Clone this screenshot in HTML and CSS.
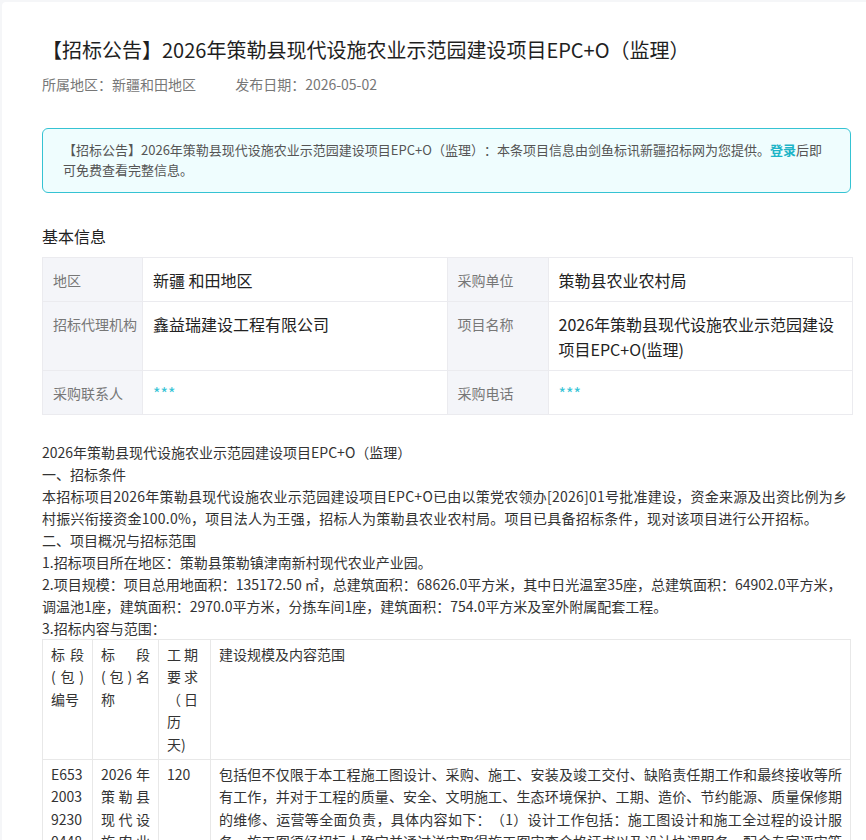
FILE: index.html
```html
<!DOCTYPE html>
<html lang="zh-CN">
<head>
    <meta charset="UTF-8">
    <meta name="viewport" content="width=device-width, initial-scale=1.0">
    <title>招标公告详情</title>
    <link rel="stylesheet" href="styles.css">
</head>
<body>
    <div class="detail">
        <h1 class="title">【招标公告】2026年策勒县现代设施农业示范园建设项目EPC+O（监理）</h1>
        <div class="meta">
            <span>所属地区：新疆和田地区</span>
            <span>发布日期：2026-05-02</span>
        </div>

        <div class="notice">
            【招标公告】2026年策勒县现代设施农业示范园建设项目EPC+O（监理）：本条项目信息由剑鱼标讯新疆招标网为您提供。<a href="#" class="login">登录</a>后即可免费查看完整信息。
        </div>

        <h2 class="section-title">基本信息</h2>
        <table class="info">
            <colgroup>
                <col class="col-label">
                <col class="col-value">
                <col class="col-label2">
                <col class="col-value">
            </colgroup>
            <tr>
                <th>地区</th>
                <td>新疆 和田地区</td>
                <th>采购单位</th>
                <td>策勒县农业农村局</td>
            </tr>
            <tr>
                <th>招标代理机构</th>
                <td>鑫益瑞建设工程有限公司</td>
                <th>项目名称</th>
                <td>2026年策勒县现代设施农业示范园建设项目EPC+O(监理)</td>
            </tr>
            <tr>
                <th>采购联系人</th>
                <td class="hidden-val">***</td>
                <th>采购电话</th>
                <td class="hidden-val">***</td>
            </tr>
        </table>

        <!-- 公告正文 -->
        <div class="content">
            <p>2026年策勒县现代设施农业示范园建设项目EPC+O（监理）</p>
            <p>一、招标条件</p>
            <p class="wide">本招标项目2026年策勒县现代设施农业示范园建设项目EPC+O已由以策党农领办[2026]01号批准建设，资金来源及出资比例为乡村振兴衔接资金100.0%，项目法人为王强，招标人为策勒县农业农村局。项目已具备招标条件，现对该项目进行公开招标。</p>
            <p>二、项目概况与招标范围</p>
            <p>1.招标项目所在地区：策勒县策勒镇津南新村现代农业产业园。</p>
            <p>2.项目规模：项目总用地面积：135172.50 ㎡，总建筑面积：68626.0平方米，其中日光温室35座，总建筑面积：64902.0平方米，调温池1座，建筑面积：2970.0平方米，分拣车间1座，建筑面积：754.0平方米及室外附属配套工程。</p>
            <p>3.招标内容与范围：</p>

            <table class="bid">
                <colgroup>
                    <col class="c1">
                    <col class="c2">
                    <col class="c3">
                    <col>
                </colgroup>
                <tr>
                    <td>标段(包)编号</td>
                    <td>标段(包)名称</td>
                    <td>工期要求（日历天)</td>
                    <td>建设规模及内容范围</td>
                </tr>
                <tr>
                    <td class="code">E6532003923004480001</td>
                    <td>2026年策勒县现代设施农业示范园建设项目EPC+O（监理）</td>
                    <td>120</td>
                    <td>包括但不仅限于本工程施工图设计、采购、施工、安装及竣工交付、缺陷责任期工作和最终接收等所有工作，并对于工程的质量、安全、文明施工、生态环境保护、工期、造价、节约能源、质量保修期的维修、运营等全面负责，具体内容如下：（1）设计工作包括：施工图设计和施工全过程的设计服务。施工图须经招标人确定并通过送审取得施工图审查合格证书以及设计协调服务，配合专家评审等工作。（2）施工工作包括：日光温室、调温池、分拣车间及室外附属配套工程的施工、安装、调试及竣工验收等。</td>
                </tr>
            </table>
        </div>
    </div>
</body>
</html>
```

FILE: styles.css
```css
body {
    margin: 0;
    padding: 2px 0 0 2px;
    background-color: #f5f6f8;
    font-family: "Noto Sans CJK SC", "Noto Sans", sans-serif;
    color: #333;
    text-spacing-trim: space-all;
}

.detail {
    background-color: #fff;
    border-radius: 4px 0 0 0;
    padding: 34px 13px 40px 40px;
}

.title {
    margin: 0;
    font-size: 20px;
    line-height: 28px;
    font-weight: normal;
    color: #1f1f1f;
}

.meta {
    margin-top: 10px;
    font-size: 14px;
    line-height: 20px;
    color: #777;
}

.meta span + span {
    margin-left: 36px;
}

/* 登录提示框 */
.notice {
    margin: 34px 2px 0 0;
    padding: 11px 24px 12px 20px;
    border: 1px solid #35c3d3;
    border-radius: 6px;
    background-color: #effdfe;
    font-size: 13px;
    line-height: 20px;
    color: #555;
}

.notice .login {
    color: #1db4c7;
    font-weight: bold;
    text-decoration: none;
}

.section-title {
    margin: 31px 0 9px;
    font-size: 16px;
    line-height: 24px;
    font-weight: normal;
    color: #222;
}

/* 基本信息表 */
.info {
    width: 100%;
    table-layout: fixed;
    border-collapse: collapse;
}

.info .col-label {
    width: 100px;
}

.info .col-label2 {
    width: 101px;
}

.info th,
.info td {
    border: 1px solid #ebebef;
    padding: 10px 10px 8px;
    vertical-align: top;
    text-align: left;
    line-height: 25px;
}

.info th {
    padding-right: 4px;
    background-color: #f4f5f9;
    font-size: 14px;
    font-weight: normal;
    color: #777;
}

.info td {
    font-size: 16px;
    color: #222;
}

.info td.hidden-val {
    color: #38c4d6;
}

/* 正文 */
.content {
    margin: 26px 2px 0 0;
    font-size: 14px;
    line-height: 22px;
    color: #333;
}

.content p {
    margin: 0;
}

.content p.wide {
    letter-spacing: 0.25px;
}

.bid {
    width: 100%;
    table-layout: fixed;
    border-collapse: collapse;
}

.bid .c1 {
    width: 50px;
}

.bid .c2 {
    width: 66px;
}

.bid .c3 {
    width: 52px;
}

.bid td {
    border: 1px solid #e8e8e8;
    padding: 3px 8px 4px;
    vertical-align: top;
    text-align: justify;
    line-height: 22.4px;
    color: #333;
}

.bid td:nth-child(3) {
    padding-right: 12px;
}

.bid td.code {
    word-break: break-all;
}
```
